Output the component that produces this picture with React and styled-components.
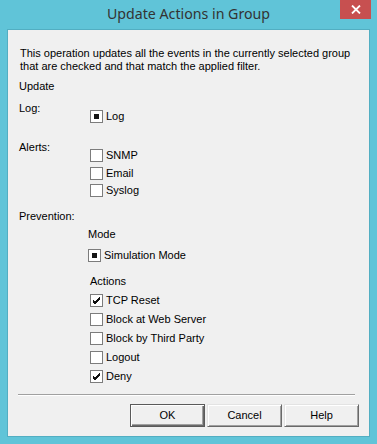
import React from "react";
import styled, { createGlobalStyle } from "styled-components";

const Global = createGlobalStyle`
  html, body { margin: 0; padding: 0; background: #60c4d8; overflow: hidden; }
  #root { width: 377px; height: 444px; }
`;

const Frame = styled.div`
  width: 377px;
  height: 444px;
  background: #60c4d8;
  display: flex;
  flex-direction: column;
  box-sizing: border-box;
`;

const TitleBar = styled.div`
  height: 29px;
  display: grid;
  grid-template-columns: 1fr auto 1fr;
  align-items: start;
  flex: none;
`;

const Title = styled.div`
  grid-column: 2;
  font-family: "Noto Sans", "Open Sans", sans-serif;
  font-size: 14.2px;
  line-height: 28px;
  color: #333;
  white-space: nowrap;
`;

const CloseButton = styled.div`
  grid-column: 3;
  justify-self: end;
  width: 31px;
  height: 19px;
  margin-right: 6px;
  background: #c75050;
  display: flex;
  align-items: center;
  justify-content: center;
`;

const Client = styled.div`
  flex: 1;
  margin: 0 7px 7px 7px;
  border: 1px solid #52aec2;
  background: #f0f0f0;
  display: flex;
  flex-direction: column;
  padding: 17px 10px 0 11px;
  font-family: "Liberation Sans", Arial, sans-serif;
  font-size: 11px;
  line-height: 13px;
  color: #000;
`;

const Intro = styled.div`
  padding-left: 1px;
`;

const Heading = styled.div`
  margin-top: ${(p) => p.$mt || 0}px;
  padding-left: ${(p) => p.$indent || 0}px;
`;

const Group = styled.div`
  display: flex;
  margin-top: ${(p) => p.$mt}px;
`;

const GroupLabel = styled.div`
  width: 71px;
  flex: none;
`;

const Options = styled.div`
  display: flex;
  flex-direction: column;
  padding-top: ${(p) => p.$pt}px;
`;

const Sub = styled.div`
  padding-left: ${(p) => p.$indent}px;
  display: flex;
  flex-direction: column;
`;

const Row = styled.div`
  display: flex;
  align-items: center;
  height: ${(p) => p.$h}px;
  margin-top: ${(p) => p.$mt || 0}px;
`;

const Box = styled.span`
  width: 13px;
  height: 13px;
  box-sizing: border-box;
  border: 1px solid #7c7c7c;
  background: #fff;
  flex: none;
  display: flex;
  align-items: center;
  justify-content: center;
  margin-right: 3px;
`;

const Square = styled.span`
  width: 5px;
  height: 5px;
  background: #151515;
`;

const Separator = styled.div`
  height: 1px;
  background: #a0a0a0;
  border-bottom: 1px solid #ffffff;
  margin: 8px 4px 0 -1px;
`;

const ButtonBar = styled.div`
  display: flex;
  justify-content: flex-end;
  gap: 2px;
  margin-top: 8px;
`;

const Button = styled.div`
  width: 75px;
  height: 23px;
  box-sizing: border-box;
  background: #f0f0f0;
  display: flex;
  align-items: center;
  justify-content: center;
  border: 1px solid ${(p) => (p.$default ? "#5a5a5a" : "transparent")};
  box-shadow: inset 1px 1px 0 #ffffff, inset -1px -1px 0 #696969,
    inset -2px -2px 0 #a0a0a0;
  ${(p) =>
    p.$default
      ? ""
      : "border-top-color: #e3e3e3; border-left-color: #e3e3e3; border-right-color: #696969; border-bottom-color: #696969; box-shadow: inset 1px 1px 0 #ffffff, inset -1px -1px 0 #a0a0a0;"}
`;

function CheckBox({ state }) {
  return (
    <Box>
      {state === "mixed" && <Square />}
      {state === "checked" && (
        <svg width="11" height="11" viewBox="0 0 11 11" shapeRendering="crispEdges">
          <polygon points="1.5,4.5 3.8,6.8 8.8,1.8 8.8,4.8 3.8,9.8 1.5,7.5" fill="#111" />
        </svg>
      )}
    </Box>
  );
}

function Check({ label, state, h = 17, mt }) {
  return (
    <Row $h={h} $mt={mt}>
      <CheckBox state={state} />
      <span>{label}</span>
    </Row>
  );
}

export default function App() {
  return (
    <>
      <Global />
      <Frame>
        <TitleBar>
          <Title>Update Actions in Group</Title>
          <CloseButton>
            <svg width="10" height="9" viewBox="0 0 10 9">
              <path d="M1 0.5 L9 8.5 M9 0.5 L1 8.5" stroke="#fff" strokeWidth="1.8" />
            </svg>
          </CloseButton>
        </TitleBar>
        <Client>
          <Intro>
            This operation updates all the events in the currently selected group
            <br />
            that are checked and that match the applied filter.
          </Intro>
          <Heading $mt={7}>Update</Heading>
          <Group $mt={9}>
            <GroupLabel>Log:</GroupLabel>
            <Options $pt={6}>
              <Check label="Log" state="mixed" />
            </Options>
          </Group>
          <Group $mt={16}>
            <GroupLabel>Alerts:</GroupLabel>
            <Options $pt={6}>
              <Check label="SNMP" h={17.5} />
              <Check label="Email" h={17.5} />
              <Check label="Syslog" h={17.5} />
            </Options>
          </Group>
          <Heading $mt={10}>Prevention:</Heading>
          <Sub $indent={69}>
            <Heading $mt={5}>Mode</Heading>
            <Check label="Simulation Mode" state="mixed" mt={6} />
            <Heading $mt={11} $indent={2}>Actions</Heading>
            <Sub $indent={2}>
              <Check label="TCP Reset" state="checked" h={19} mt={3} />
              <Check label="Block at Web Server" h={19} />
              <Check label="Block by Third Party" h={19} />
              <Check label="Logout" h={19} />
              <Check label="Deny" state="checked" h={19} />
            </Sub>
          </Sub>
          <Separator />
          <ButtonBar>
            <Button $default>OK</Button>
            <Button>Cancel</Button>
            <Button>Help</Button>
          </ButtonBar>
        </Client>
      </Frame>
    </>
  );
}
